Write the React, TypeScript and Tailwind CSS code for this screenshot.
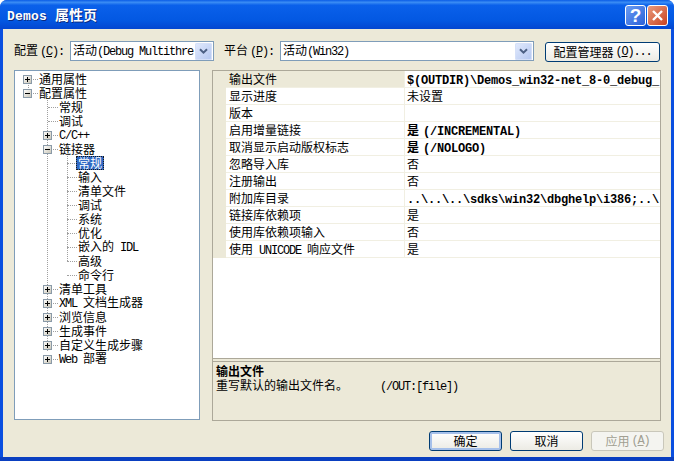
import React from "react";

const CJK = '"Noto Sans CJK SC", "Liberation Sans", sans-serif';
const isCjk = /^[\u2E80-\u9FFF\u3000-\u303F\uFF00-\uFFEF]/;

function T({ s, bold = false, title = false }: { s: string; bold?: boolean; title?: boolean }) {
  const runs = s.match(/[\u2E80-\u9FFF\u3000-\u303F\uFF00-\uFFEF]+|[^\u2E80-\u9FFF\u3000-\u303F\uFF00-\uFFEF]+/g) || [];
  return (
    <>
      {runs.map((r, i) =>
        isCjk.test(r) ? (
          <span key={i} className="font-['Noto_Sans_CJK_SC',sans-serif]">{r}</span>
        ) : (
          <span
            key={i}
            className={
              title
                ? "font-['Liberation_Mono',monospace] text-[13px] tracking-[0.2px]"
                : bold
                ? `font-['Liberation_Mono',monospace] text-[12px] tracking-[-0.2px] ${i > 0 ? "ml-[4px]" : ""}`
                : "font-['Liberation_Mono',monospace] text-[12px] tracking-[-1.2px]"
            }
          >
            {r}
          </span>
        )
      )}
    </>
  );
}

/* A label with an underlined access key, e.g. 配置(C): */
function Key({ pre, k, post }: { pre: string; k: string; post: string }) {
  const mono = "font-['Liberation_Mono',monospace] text-[12px] tracking-[-1.2px]";
  return (
    <>
      <span className="font-['Noto_Sans_CJK_SC',sans-serif]">{pre}</span>
      <span className={`${mono} ml-[2px]`}>(</span>
      <span className={`${mono} underline`}>{k}</span>
      <span className={mono}>{post}</span>
    </>
  );
}

function Plus({ open = false }: { open?: boolean }) {
  return (
    <svg width="9" height="9" viewBox="0 0 9 9" className="shrink-0">
      <defs>
        <linearGradient id="bx" x1="0" y1="0" x2="1" y2="1">
          <stop offset="0" stopColor="#ffffff" />
          <stop offset="1" stopColor="#c8c4b4" />
        </linearGradient>
      </defs>
      <rect x="0.5" y="0.5" width="8" height="8" fill="url(#bx)" stroke="#8a9aa8" />
      <path d={open ? "M2 4.5H7" : "M2 4.5H7M4.5 2V7"} stroke="#000" strokeWidth="1" />
    </svg>
  );
}

type Node = { t: string; lvl: 0 | 1 | 2; exp?: "+" | "-"; sel?: boolean };
const nodes: Node[] = [
  { t: "通用属性", lvl: 0, exp: "+" },
  { t: "配置属性", lvl: 0, exp: "-" },
  { t: "常规", lvl: 1 },
  { t: "调试", lvl: 1 },
  { t: "C/C++", lvl: 1, exp: "+" },
  { t: "链接器", lvl: 1, exp: "-" },
  { t: "常规", lvl: 2, sel: true },
  { t: "输入", lvl: 2 },
  { t: "清单文件", lvl: 2 },
  { t: "调试", lvl: 2 },
  { t: "系统", lvl: 2 },
  { t: "优化", lvl: 2 },
  { t: "嵌入的 IDL", lvl: 2 },
  { t: "高级", lvl: 2 },
  { t: "命令行", lvl: 2 },
  { t: "清单工具", lvl: 1, exp: "+" },
  { t: "XML 文档生成器", lvl: 1, exp: "+" },
  { t: "浏览信息", lvl: 1, exp: "+" },
  { t: "生成事件", lvl: 1, exp: "+" },
  { t: "自定义生成步骤", lvl: 1, exp: "+" },
  { t: "Web 部署", lvl: 1, exp: "+" },
];

const rows: [string, string, boolean][] = [
  ["输出文件", "$(OUTDIR)\\Demos_win32-net_8-0_debug_", true],
  ["显示进度", "未设置", false],
  ["版本", "", false],
  ["启用增量链接", "是(/INCREMENTAL)", true],
  ["取消显示启动版权标志", "是(/NOLOGO)", true],
  ["忽略导入库", "否", false],
  ["注册输出", "否", false],
  ["附加库目录", "..\\..\\..\\sdks\\win32\\dbghelp\\i386;..\\", true],
  ["链接库依赖项", "是", false],
  ["使用库依赖项输入", "否", false],
  ["使用 UNICODE 响应文件", "是", false],
];

function Arrow() {
  return (
    <span className="flex h-[17px] w-[17px] shrink-0 items-center justify-center rounded-[2px] bg-gradient-to-br from-[#e3ebfd] to-[#b3c6f0] shadow-[inset_0_0_0_1px_#d5e0f8]">
      <svg width="9" height="7" viewBox="0 0 9 7">
        <path d="M1 1.2L4.5 4.7L8 1.2" fill="none" stroke="#4d6185" strokeWidth="2" />
      </svg>
    </span>
  );
}

function Combo({ text, w }: { text: string; w: string }) {
  return (
    <div className={`flex h-[20px] items-center justify-between border border-[#7f9db9] bg-white pl-[2px] pr-px ${w}`}>
      <span className="whitespace-nowrap"><T s={text} /></span>
      <Arrow />
    </div>
  );
}

function Btn({ children, w, def = false, off = false }: { children: React.ReactNode; w: string; def?: boolean; off?: boolean }) {
  return (
    <div
      className={`flex h-[20px] items-center justify-center rounded-[3px] border ${w} ${
        off
          ? "border-[#c9c7ba] bg-[#f4f4f0] text-[#a19f92]"
          : "border-[#003c74] bg-gradient-to-b from-white to-[#ecebe4] text-black"
      } ${def ? "shadow-[inset_0_0_0_2px_#a6c0ea]" : ""}`}
    >
      {children}
    </div>
  );
}

export default function App() {
  return (
    <div
      style={{ fontFamily: CJK }}
      className="flex h-[461px] w-[674px] flex-col overflow-hidden rounded-t-[7px] bg-[#0a4fe0] text-[12px] leading-[14px] text-black"
    >
      <div className="flex h-[29px] shrink-0 items-center justify-between bg-[linear-gradient(to_bottom,#0a5ce6_0%,#3a8cf4_8%,#0a60ea_18%,#0358e2_70%,#0346d0_100%)] pl-[7px] pr-[6px] pt-[2px]">
        <span className="whitespace-nowrap text-[14px] font-bold text-white [text-shadow:1px_1px_0_#0a2a80]">
          <T s="Demos 属性页" title />
        </span>
        <div className="flex gap-[1px]">
          <div className="flex h-[21px] w-[21px] items-center justify-center rounded-[3px] border border-white bg-gradient-to-br from-[#6b9cf2] to-[#2a5fd8]">
            <span className="font-['Liberation_Sans',sans-serif] text-[19px] font-bold text-white">?</span>
          </div>
          <div className="flex h-[21px] w-[21px] items-center justify-center rounded-[3px] border border-white bg-gradient-to-br from-[#e89a7c] to-[#c9401c]">
            <svg width="13" height="13" viewBox="0 0 13 13">
              <path d="M2 2L11 11M11 2L2 11" stroke="#fff" strokeWidth="2.4" />
            </svg>
          </div>
        </div>
      </div>

      <div className="mx-[3px] flex min-h-0 flex-1 flex-col bg-[#ece9d8]">
        <div className="flex h-[41px] shrink-0 items-center pl-[11px] pt-[3px]">
          <span className="w-[56px] whitespace-nowrap"><Key pre="配置" k="C" post="):" /></span>
          <Combo text="活动(Debug Multithre" w="w-[144px]" />
          <span className="ml-[10px] w-[56px] whitespace-nowrap"><Key pre="平台" k="P" post="):" /></span>
          <Combo text="活动(Win32)" w="w-[254px]" />
          <div className="ml-[11px] mt-[2px]">
            <Btn w="w-[115px]"><Key pre="配置管理器" k="O" post=")..." /></Btn>
          </div>
        </div>

        <div className="flex h-[351px] shrink-0 pl-[11px]">
          <div className="relative h-[350px] w-[186px] shrink-0 border border-[#7f9db9] bg-white pt-[1px]">
            <svg width="184" height="300" className="absolute left-0 top-0" fill="none" stroke="#a0a0a0" strokeDasharray="1 1">
              <path d="M13.5 14V20" />
              <path d="M32.5 23V280" />
              <path d="M52.5 85V190" />
            </svg>
            <div className="relative">
              {nodes.map((n, i) => (
                <div key={i} className="flex h-[14px] items-center whitespace-nowrap">
                  <div className={n.lvl === 0 ? "w-[8px] shrink-0" : n.lvl === 1 ? "w-[28px] shrink-0" : "w-[47px] shrink-0"} />
                  <div className="flex w-[16px] shrink-0 items-center">
                    {n.exp ? <Plus open={n.exp === "-"} /> : <span className="ml-[5px] w-[10px] border-t border-dotted border-[#a0a0a0]" />}
                    {n.exp && <span className="ml-[1px] w-[5px] border-t border-dotted border-[#a0a0a0]" />}
                  </div>
                  <span
                    className={
                      n.sel
                        ? "-ml-[2px] inline-block h-[14px] border border-dotted border-[#1a1a1a] bg-[#316ac5] px-[1px] leading-[12px] text-white"
                        : ""
                    }
                  >
                    <T s={n.t} />
                  </span>
                </div>
              ))}
            </div>
          </div>

          <div className="ml-[12px] flex h-[351px] w-[449px] shrink-0 flex-col border border-[#aca899] bg-white">
            <div className="min-h-0 flex-1">
              {rows.map(([k, v, b], i) => (
                <div key={i} className="flex h-[17px] border-b border-[#f1efe2]">
                  <div className="-mb-px w-[13px] shrink-0 bg-[#ece9d8]" />
                  <div className={`w-[179px] shrink-0 overflow-hidden whitespace-nowrap border-r border-[#f1efe2] pl-[3px] leading-[16px] ${i === 0 ? "bg-[#ece9d8]" : ""}`}><T s={k} /></div>
                  <div className={`min-w-0 flex-1 overflow-hidden whitespace-nowrap pl-[2px] leading-[16px] ${b ? "font-bold" : ""}`}><T s={v} bold={b} /></div>
                </div>
              ))}
            </div>
            <div className="h-[62px] shrink-0 border-t-[4px] border-double border-[#aca899] bg-[#ece9d8] pl-[3px] pt-[2px]">
              <div className="font-bold"><T s="输出文件" /></div>
              <div className="flex whitespace-nowrap">
                <span className="w-[164px]"><T s="重写默认的输出文件名。" /></span>
                <span><T s="(/OUT:[file])" /></span>
              </div>
            </div>
          </div>
        </div>

        <div className="flex flex-1 justify-end gap-[8px] pr-[7px] pt-[10px]">
          <Btn w="w-[73px]" def>确定</Btn>
          <Btn w="w-[73px]">取消</Btn>
          <Btn w="w-[73px]" off><Key pre="应用" k="A" post=")" /></Btn>
        </div>
      </div>
      <div className="h-[4px] shrink-0 bg-[#0a3fc0]" />
    </div>
  );
}
